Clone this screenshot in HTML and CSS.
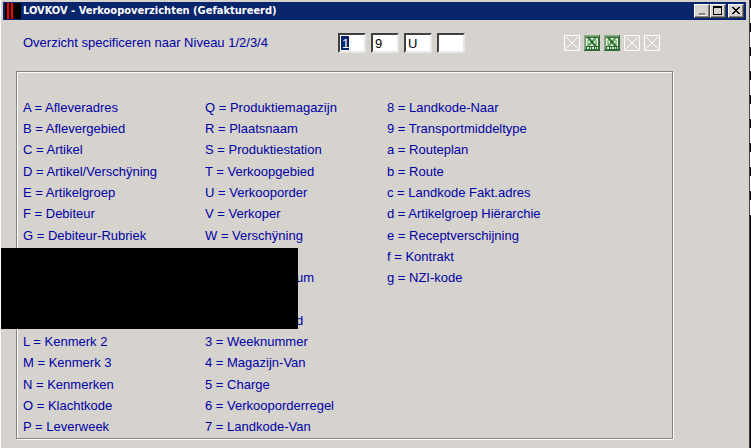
FILE: index.html
```html
<!DOCTYPE html>
<html lang="nl">
<head>
    <meta charset="utf-8">
    <title>LOVKOV - Verkoopoverzichten (Gefaktureerd)</title>
    <link rel="stylesheet" href="styles.css">
</head>
<body>
    <div class="window">
        <header class="titlebar">
            <svg class="logo" viewBox="0 0 16 16" shape-rendering="crispEdges">
                <path fill="#000" d="M0 0h16v16H0z"/>
                <path fill="#f00" d="M2 0h2v16H2zM6 0h2v16H6z"/>
            </svg>
            <h1>LOVKOV - Verkoopoverzichten (Gefaktureerd)</h1>
            <div class="controls">
                <button type="button" aria-label="Minimaliseren">
                    <svg viewBox="0 0 12 10" shape-rendering="crispEdges"><path fill="#fff" d="M4 9h6v1H4z"/><path fill="#848284" d="M3 7h6v2H3z"/></svg>
                </button>
                <button type="button" aria-label="Maximaliseren">
                    <svg viewBox="0 0 12 10" shape-rendering="crispEdges"><path fill="#000" fill-rule="evenodd" d="M1 0h9v9H1zM2 2v6h7V2z"/></svg>
                </button>
                <button type="button" class="close" aria-label="Sluiten">
                    <svg viewBox="0 0 12 10" shape-rendering="crispEdges"><path fill="#000" d="M2 1h2v1H2zM8 1h2v1H8zM3 2h2v1H3zM7 2h2v1H7zM4 3h4v1H4zM5 4h2v1H5zM4 5h4v1H4zM3 6h2v1H3zM7 6h2v1H7zM2 7h2v1H2zM8 7h2v1H8z"/></svg>
                </button>
            </div>
        </header>

        <main>
            <form class="levels">
                <label for="level1">Overzicht specificeren naar Niveau 1/2/3/4</label>
                <div class="fields">
                    <input class="selected" id="level1" type="text" maxlength="1" value="1">
                    <input type="text" maxlength="1" value="9" aria-label="Niveau 2">
                    <input type="text" maxlength="1" value="U" aria-label="Niveau 3">
                    <input type="text" maxlength="1" value="" aria-label="Niveau 4">
                </div>
                <div class="tools">
                    <button type="button" disabled aria-label="Niet beschikbaar"><svg viewBox="0 0 16 16"><use href="#cross"/></svg></button>
                    <button type="button" aria-label="Naar Excel"><svg viewBox="0 0 16 16"><use href="#excel"/></svg></button>
                    <button type="button" aria-label="Naar Excel"><svg viewBox="0 0 16 16"><use href="#excel"/></svg></button>
                    <button type="button" disabled aria-label="Niet beschikbaar"><svg viewBox="0 0 16 16"><use href="#cross"/></svg></button>
                    <button type="button" disabled aria-label="Niet beschikbaar"><svg viewBox="0 0 16 16"><use href="#cross"/></svg></button>
                </div>
            </form>

            <section class="panel">
                <ul class="codes">
                    <li>A = Afleveradres</li>
                    <li>B = Aflevergebied</li>
                    <li>C = Artikel</li>
                    <li>D = Artikel/Verschÿning</li>
                    <li>E = Artikelgroep</li>
                    <li>F = Debiteur</li>
                    <li>G = Debiteur-Rubriek</li>
                    <li></li>
                    <li></li>
                    <li></li>
                    <li></li>
                    <li>L = Kenmerk 2</li>
                    <li>M = Kenmerk 3</li>
                    <li>N = Kenmerken</li>
                    <li>O = Klachtkode</li>
                    <li>P = Leverweek</li>
                </ul>
                <ul class="codes">
                    <li>Q = Produktiemagazijn</li>
                    <li>R = Plaatsnaam</li>
                    <li>S = Produktiestation</li>
                    <li>T = Verkoopgebied</li>
                    <li>U = Verkooporder</li>
                    <li>V = Verkoper</li>
                    <li>W = Verschÿning</li>
                    <li></li>
                    <li class="tail">um</li>
                    <li></li>
                    <li class="tail">d</li>
                    <li>3 = Weeknummer</li>
                    <li>4 = Magazijn-Van</li>
                    <li>5 = Charge</li>
                    <li>6 = Verkooporderregel</li>
                    <li>7 = Landkode-Van</li>
                </ul>
                <ul class="codes">
                    <li>8 = Landkode-Naar</li>
                    <li>9 = Transportmiddeltype</li>
                    <li>a = Routeplan</li>
                    <li>b = Route</li>
                    <li>c = Landkode Fakt.adres</li>
                    <li>d = Artikelgroep Hiërarchie</li>
                    <li>e = Receptverschijning</li>
                    <li>f = Kontrakt</li>
                    <li>g = NZI-kode</li>
                </ul>
            </section>
        </main>
        <div class="cover"></div>
        <div class="edge"></div>
    </div>

    <svg class="symbols" aria-hidden="true">
        <symbol id="cross" viewBox="0 0 16 16">
            <path fill="none" stroke="#fff" d="M.5.5h15v15H.5zM2 2l12 12M14 2L2 14"/>
        </symbol>
        <symbol id="excel" viewBox="0 0 16 16">
            <path fill="#2f6b35" d="M0 0h16v16H0z"/>
            <path fill="#8fa98a" d="M0 0h15v1H1v14H0z"/>
            <path fill="#6f9a66" d="M1 1h14v1H2v12H1z"/>
            <path fill="#f1f6ee" d="M2 3h12v8H2z"/>
            <path fill="#9cc493" d="M3 5h2v5H3zM11 5h2v5h-2z"/>
            <path fill="#2e7a36" d="M3 3h3l7 8h-3z"/>
            <path fill="#5ea35a" d="M10 3h3l-7 8H3z"/>
            <path fill="#1d5a28" d="M7 6h2v2H7z"/>
            <path fill="#dce8d8" d="M3 12h2v2H3zM6 12h1v2H6zM8 12h2v2H8zM11 12h1v2h-1zM13 12h1v2h-1z"/>
        </symbol>
    </svg>
</body>
</html>
```

FILE: styles.css
```css
* {
    box-sizing: border-box;
}
body {
    margin: 0;
    background-color: #d6d3ce;
    color: #0000a5;
    font: 13px/16px "Liberation Sans", Arial, sans-serif;
}
.window {
    position: relative;
    display: flex;
    flex-direction: column;
    min-height: 100vh;
    padding: 2px 3px 9px 2px;
    border-left: 1px solid #fff;
    border-right: 2px solid #424142;
}
.titlebar {
    display: flex;
    align-items: center;
    height: 18px;
    padding: 0 2px;
    background-color: #08246b;
    color: #fff;
}
.logo {
    width: 16px;
    height: 16px;
    margin-right: 2px;
}
.titlebar h1 {
    flex: 1;
    margin: 0;
    font: bold 11px/16px "DejaVu Sans Condensed", Tahoma, sans-serif;
}
.controls {
    display: flex;
}
button {
    padding: 0;
    border: none;
    background: none;
}
button svg {
    display: block;
}
.controls button {
    width: 16px;
    height: 14px;
    padding: 1px;
    background-color: #d6d3ce;
    border: 1px solid;
    border-color: #fff #424142 #424142 #fff;
    box-shadow: inset -1px -1px #848284;
}
.controls svg {
    width: 12px;
    height: 10px;
}
.controls .close {
    margin-left: 2px;
}
main {
    display: flex;
    flex: 1;
    flex-direction: column;
    padding: 0 73px 0 13px;
}
.levels {
    display: flex;
    align-items: center;
    height: 46px;
    padding: 0 13px 0 7px;
}
.levels label {
    width: 315px;
}
.fields {
    display: flex;
    gap: 5px;
}
.fields input {
    width: 28px;
    height: 20px;
    padding: 0 2px;
    border: 2px solid;
    border-color: #424142 #e7e7e7 #e7e7e7 #424142;
    border-radius: 0;
    background-color: #fff;
    color: #000;
    font: inherit;
}
.fields .selected {
    background: linear-gradient(#08246b, #08246b) 1px 1px / 8px 14px no-repeat #fff;
    color: #fff;
}
.tools {
    display: flex;
    gap: 4px;
    margin-left: auto;
}
.tools svg {
    width: 16px;
    height: 16px;
}
.panel {
    display: grid;
    flex: 1;
    grid-template-columns: 182px 182px 1fr;
    padding: 25px 6px 0;
    margin-top: 5px;
    border: 1px solid #848284;
    box-shadow: 1px 1px #fff, inset 1px 1px #fff;
}
.codes {
    display: grid;
    grid-template-rows: repeat(16, 1fr);
    align-items: center;
    margin: 0;
    padding: 0;
    list-style: none;
}
.tail {
    padding-left: 91px;
}
/* blacked-out part of the list */
.cover {
    position: absolute;
    top: 248px;
    left: 0;
    width: 297px;
    height: 81px;
    background-color: #000;
}
/* dashed strip of the desktop behind the window */
.edge {
    position: absolute;
    top: 0;
    right: -2px;
    bottom: 0;
    width: 1px;
    background: repeating-linear-gradient(#000 0 8px, #fff 8px 23px, #000 23px 24px) top / 1px 216px no-repeat #000;
}
.symbols {
    position: absolute;
    width: 0;
    height: 0;
}
```
